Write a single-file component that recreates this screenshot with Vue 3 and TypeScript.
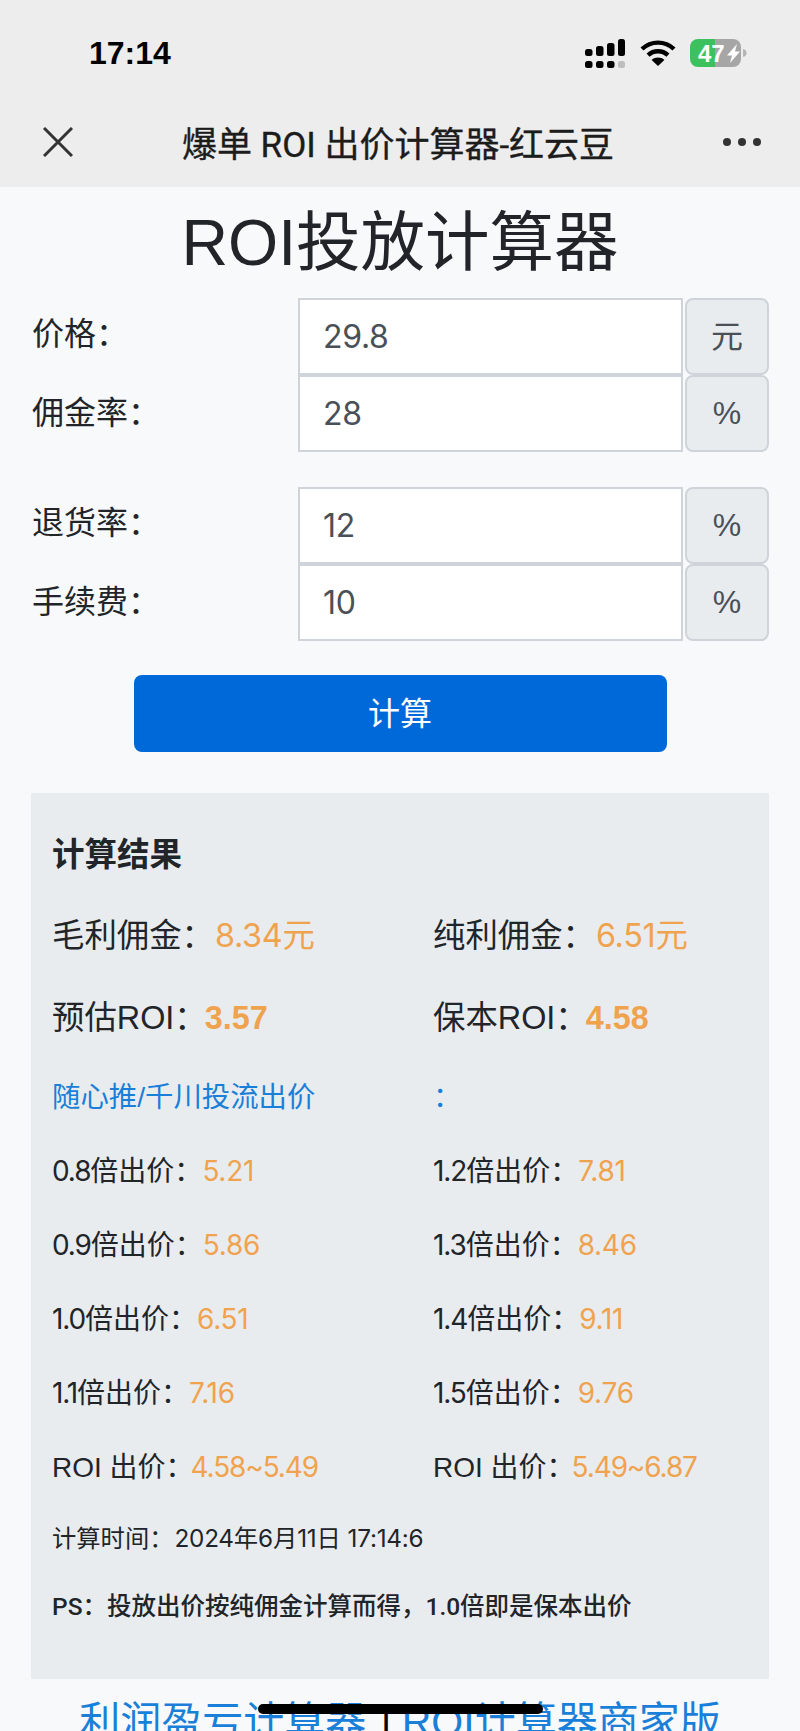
<script setup lang="ts">
interface Field { label: string; value: string; unit: string }
interface Bid { label: string; value: string }

const firstFields: Field[] = [
  { label: '价格：', value: '29.8', unit: '元' },
  { label: '佣金率：', value: '28', unit: '%' },
]
const secondFields: Field[] = [
  { label: '退货率：', value: '12', unit: '%' },
  { label: '手续费：', value: '10', unit: '%' },
]
const bids: [Bid, Bid][] = [
  [{ label: '0.8倍出价：', value: '5.21' }, { label: '1.2倍出价：', value: '7.81' }],
  [{ label: '0.9倍出价：', value: '5.86' }, { label: '1.3倍出价：', value: '8.46' }],
  [{ label: '1.0倍出价：', value: '6.51' }, { label: '1.4倍出价：', value: '9.11' }],
  [{ label: '1.1倍出价：', value: '7.16' }, { label: '1.5倍出价：', value: '9.76' }],
]
const roiBids: Bid[] = [
  { label: 'ROI 出价：', value: '4.58~5.49' },
  { label: 'ROI 出价：', value: '5.49~6.87' },
]

// Numbers use a family with proportional figures; the rest stays in the default stack.
const parts = (s: string) =>
  s.split(/(\d[\d.:~]*)/).filter(Boolean).map((t) => ({ t, num: /^\d/.test(t) }))
</script>

<template>
  <div class="phone">
    <header class="chrome">
      <div class="status">
        <span class="time">17:14</span>
        <div class="status-icons">
          <svg class="signal" width="41" height="29" viewBox="0 0 41 29">
            <rect x="0" y="10" width="7.5" height="7" rx="2.5" fill="#000" />
            <rect x="11" y="7" width="7.5" height="10" rx="2.5" fill="#000" />
            <rect x="22" y="4" width="7.5" height="13" rx="2.5" fill="#000" />
            <rect x="33" y="0" width="7" height="17" rx="2.5" fill="#000" />
            <rect x="0" y="22" width="7.5" height="7" rx="2.5" fill="#000" />
            <rect x="11" y="22" width="7.5" height="7" rx="2.5" fill="#000" />
            <rect x="22" y="22" width="7.5" height="7" rx="2.5" fill="#000" />
            <rect x="33" y="22" width="7" height="7" rx="2.5" fill="#bdbdbd" />
          </svg>
          <svg class="wifi" width="36" height="26" viewBox="0 0 36 26">
            <path d="M2 9 C11 0.5 25 0.5 34 9" fill="none" stroke="#000" stroke-width="4.4" />
            <path d="M8 15.2 C13.8 10 22.2 10 28 15.2" fill="none" stroke="#000" stroke-width="4.4" />
            <path d="M11.6 20 L18 26 L24.4 20 C20.6 16.8 15.4 16.8 11.6 20 Z" fill="#000" />
          </svg>
          <svg class="battery" width="57" height="28" viewBox="0 0 57 28">
            <defs>
              <clipPath id="battery-body"><rect x="0" y="0" width="51" height="28" rx="8" /></clipPath>
            </defs>
            <g clip-path="url(#battery-body)">
              <rect x="0" y="0" width="25" height="28" fill="#3cc15e" />
              <rect x="25" y="0" width="26" height="28" fill="#a6a6a6" />
            </g>
            <path d="M53 10 C55.5 10.5 56.5 12 56.5 14 C56.5 16 55.5 17.5 53 18 Z" fill="#b5b5b5" />
            <text x="8" y="23" class="battery-text">47</text>
            <path d="M47 5 L37 16.5 L42 16.5 L40 24 L50 12.5 L45 12.5 Z" fill="#fff" />
          </svg>
        </div>
      </div>
      <div class="nav">
        <svg class="close" width="30" height="30" viewBox="0 0 30 30">
          <path d="M1 1 L29 29 M29 1 L1 29" fill="none" stroke="#333" stroke-width="3" />
        </svg>
        <span class="nav-title">爆单 ROI 出价计算器-红云豆</span>
        <div class="dots"><i></i><i></i><i></i></div>
      </div>
    </header>

    <main class="content">
      <h1 class="title">ROI投放计算器</h1>

      <div class="form-group">
        <div v-for="f in firstFields" :key="f.label" class="field">
          <label class="field-label">{{ f.label }}</label>
          <input class="field-input" type="text" :value="f.value" />
          <span class="field-unit" :class="{ cjk: f.unit === '元' }">{{ f.unit }}</span>
        </div>
      </div>
      <div class="form-group second">
        <div v-for="f in secondFields" :key="f.label" class="field">
          <label class="field-label">{{ f.label }}</label>
          <input class="field-input" type="text" :value="f.value" />
          <span class="field-unit">{{ f.unit }}</span>
        </div>
      </div>

      <button class="submit" type="button">计算</button>

      <section class="result">
        <h2 class="result-title">计算结果</h2>
        <div class="row big">
          <div>毛利佣金：<span class="val"><span class="num wide">8.34</span>元</span></div>
          <div>纯利佣金：<span class="val"><span class="num wide">6.51</span>元</span></div>
        </div>
        <div class="row big">
          <div>预估ROI：<b class="strong">3.57</b></div>
          <div>保本ROI：<b class="strong">4.58</b></div>
        </div>
        <div class="row small blue">
          <div>随心推/千川投流出价</div>
          <div>：</div>
        </div>
        <div v-for="(pair, i) in bids" :key="i" class="row small">
          <div v-for="b in pair" :key="b.label">
            <span v-for="(p, k) in parts(b.label)" :key="k" :class="{ num: p.num }">{{ p.t }}</span><span class="val num wide">{{ b.value }}</span>
          </div>
        </div>
        <div class="row small roi">
          <div v-for="(b, k) in roiBids" :key="k">{{ b.label }}<span class="val num">{{ b.value }}</span></div>
        </div>
        <p class="time-line">
          计算时间：<span class="stamp"><span v-for="(p, k) in parts('2024年6月11日 17:14:6')" :key="k" :class="{ num: p.num, wide: p.num }">{{ p.t }}</span></span>
        </p>
        <p class="ps">PS：投放出价按纯佣金计算而得，1.0倍即是保本出价</p>
      </section>

      <div class="links">
        <a class="link">利润盈亏计算器</a>
        <span class="sep"> | </span>
        <a class="link">ROI计算器商家版</a>
      </div>
    </main>

    <div class="home-bar"></div>
  </div>
</template>

<style>
html, body { margin: 0; padding: 0; }
</style>

<style scoped>
.phone {
  position: relative;
  width: 800px;
  height: 1731px;
  overflow: hidden;
  background: #f8f9fa;
  color: #212529;
  font-family: "Liberation Sans", "Noto Sans CJK SC", sans-serif;
}
.num { font-family: Inter, "Noto Sans CJK SC", sans-serif; letter-spacing: -0.04em; }
.num.wide { letter-spacing: -0.01em; }
.chrome { height: 187px; background: #ededed; }
.status {
  height: 106px;
  display: flex;
  align-items: center;
  justify-content: space-between;
  padding: 0 53px 0 89px;
}
.time { font-size: 32px; font-weight: 700; color: #000; }
.status-icons { display: flex; align-items: center; }
.wifi { margin-left: 14px; }
.battery { margin-left: 14px; }
.battery-text { font-family: "Liberation Sans", sans-serif; font-size: 24px; font-weight: 700; fill: #fff; }
.nav {
  height: 71px;
  display: flex;
  align-items: center;
  justify-content: space-between;
  padding: 0 39px 0 43px;
}
.nav-title {
  font-family: Roboto, "Noto Sans CJK SC", sans-serif;
  font-size: 35px;
  font-weight: 400;
  -webkit-text-stroke: 0.35px #1c1c1c;
  color: #1c1c1c;
  white-space: nowrap;
}
.dots { display: flex; gap: 7px; }
.dots i { width: 8px; height: 8px; border-radius: 50%; background: #333; display: block; }

.title {
  margin: 18px 0 17px;
  font-size: 64.5px;
  line-height: 76px;
  font-weight: 400;
  text-align: center;
}
.form-group { display: flex; flex-direction: column; padding: 0 32px; }
.form-group.second { margin-top: 35px; }
.field { display: flex; height: 77px; }
.field-label {
  width: 266px;
  flex: none;
  font-size: 32px;
  line-height: 76px;
}
.field:first-child .field-label { line-height: 72px; }
.field-input {
  width: 385px;
  flex: none;
  box-sizing: border-box;
  height: 77px;
  margin: 0;
  padding: 0 24px 0 23px;
  border: 2px solid #ced4da;
  border-radius: 0;
  background: #fff;
  color: #495057;
  font-family: Inter, sans-serif;
  letter-spacing: -0.01em;
  font-size: 32px;
  outline: none;
}
.field-unit {
  width: 84px;
  flex: none;
  margin-left: 2px;
  box-sizing: border-box;
  height: 77px;
  display: flex;
  align-items: center;
  justify-content: center;
  border: 2px solid #ced4da;
  border-radius: 8px;
  background: #e9ecef;
  color: #495057;
  font-size: 32px;
}
.field-unit.cjk { padding-bottom: 6px; }
.submit {
  display: block;
  width: 533px;
  height: 77px;
  margin: 34px auto 0;
  padding: 0 0 6px;
  border: none;
  border-radius: 8px;
  background: #0069d9;
  color: #fff;
  font: inherit;
  font-size: 32px;
}
.result {
  box-sizing: border-box;
  width: 738px;
  height: 886px;
  margin: 41px 0 0 31px;
  padding: 38px 0 0 21px;
  background: #e9ecef;
}
.result-title {
  margin: 0 0 33px;
  font-size: 32.5px;
  line-height: 48px;
  font-weight: 700;
}
.row { display: grid; grid-template-columns: 381px 1fr; white-space: nowrap; }
.row.big { font-size: 32.4px; line-height: 48px; height: 48px; margin-bottom: 34px; }
.row.small { font-size: 28px; line-height: 42px; height: 42px; margin-bottom: 32px; }
.row.blue { color: #1a7fd8; font-size: 28.4px; }
.val { color: #f0a34e; }
.big .val { margin-left: 1px; }
.roi .val { margin-left: -3px; }
.strong { color: #f0a34e; font-weight: 700; margin-left: -2px; }
.time-line { margin: 0 0 33px; font-size: 24.3px; line-height: 36px; height: 36px; }
.stamp { margin-left: 1px; }
.ps { margin: 0; font-family: Roboto, "Noto Sans CJK SC", sans-serif; font-size: 24.5px; line-height: 36px; height: 36px; font-weight: 500; }
.links {
  margin-top: 13px;
  font-size: 41px;
  line-height: 60px;
  text-align: center;
  white-space: pre;
}
.link { color: #1a7fd8; }
.sep { color: #000; margin: 0 -1px 0 3px; }
.home-bar {
  position: absolute;
  left: 258px;
  top: 1704px;
  width: 285px;
  height: 10px;
  border-radius: 5px;
  background: #000;
}
</style>
